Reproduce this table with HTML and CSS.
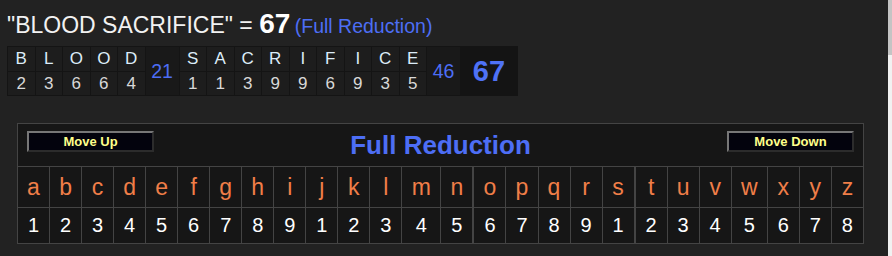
FILE: index.html
```html
<!DOCTYPE html>
<html>
<head>
<meta charset="utf-8">
<link rel="stylesheet" href="styles.css">
</head>
<body>
<div class="page">
  <div class="headline">
    <span class="phrase">"BLOOD SACRIFICE" = </span><span class="value">67</span> <span class="cipher-name">(Full Reduction)</span>
  </div>
  <table class="breakdown">
    <tr>
      <td class="lt">B</td><td class="lt">L</td><td class="lt">O</td><td class="lt">O</td><td class="lt">D</td>
      <td class="wsum" rowspan="2">21</td>
      <td class="lt">S</td><td class="lt">A</td><td class="lt">C</td><td class="lt">R</td><td class="lt">I</td><td class="lt">F</td><td class="lt">I</td><td class="lt">C</td><td class="lt">E</td>
      <td class="wsum" rowspan="2">46</td>
      <td class="total" rowspan="2">67</td>
    </tr>
    <tr>
      <td class="nm">2</td><td class="nm">3</td><td class="nm">6</td><td class="nm">6</td><td class="nm">4</td>
      <td class="nm">1</td><td class="nm">1</td><td class="nm">3</td><td class="nm">9</td><td class="nm">9</td><td class="nm">6</td><td class="nm">9</td><td class="nm">3</td><td class="nm">5</td>
    </tr>
  </table>

  <table class="chart">
    <tr>
      <td class="chart-head" colspan="26">
        <div class="head-bar">
          <button class="move-btn">Move Up</button>
          <span class="chart-title">Full Reduction</span>
          <button class="move-btn">Move Down</button>
        </div>
      </td>
    </tr>
    <tr class="letters">
      <td>a</td><td>b</td><td>c</td><td>d</td><td>e</td><td>f</td><td>g</td><td>h</td><td>i</td><td>j</td><td>k</td><td>l</td><td class="wide-m">m</td><td>n</td><td class="sep">o</td><td>p</td><td>q</td><td>r</td><td>s</td><td class="sep">t</td><td>u</td><td>v</td><td class="wide-w">w</td><td>x</td><td>y</td><td>z</td>
    </tr>
    <tr class="numbers">
      <td>1</td><td>2</td><td>3</td><td>4</td><td>5</td><td>6</td><td>7</td><td>8</td><td>9</td><td>1</td><td>2</td><td>3</td><td>4</td><td>5</td><td class="sep">6</td><td>7</td><td>8</td><td>9</td><td>1</td><td class="sep">2</td><td>3</td><td>4</td><td>5</td><td>6</td><td>7</td><td>8</td>
    </tr>
  </table>
</div>
<div class="scrollbar"><div class="thumb"></div></div>
</body>
</html>
```

FILE: styles.css
```css
html, body {
  margin: 0;
  padding: 0;
  background: #222222;
  font-family: "Liberation Sans", Arial, sans-serif;
  overflow: hidden;
}

.page {
  padding: 7px 0 0 7px;
}

.headline {
  height: 33px;
  line-height: 33px;
  color: #f2f2f2;
  white-space: nowrap;
}

.phrase {
  font-size: 23px;
}

.value {
  font-size: 28px;
  font-weight: bold;
  color: #ffffff;
}

.cipher-name {
  font-size: 19.5px;
  color: #4d6ef5;
}

.breakdown {
  margin-top: 6px;
  border-collapse: collapse;
  background: #1d1d1d;
  table-layout: fixed;
}

.breakdown td {
  border: 1px solid #141414;
  text-align: center;
  padding: 0;
}

.breakdown .lt {
  width: 26.5px;
  height: 24px;
  font-size: 17px;
  color: #dcecf8;
}

.breakdown .nm {
  height: 23px;
  font-size: 17px;
  color: #d8d8d8;
}

.breakdown .wsum {
  width: 33px;
  font-size: 19.5px;
  color: #4d6ef5;
  background: #191919;
}

.breakdown .total {
  width: 56px;
  font-size: 29px;
  font-weight: bold;
  color: #4f72f6;
  background: #141414;
}

.chart {
  margin: 27px 0 0 10px;
  width: 847px;
  border-collapse: collapse;
  background: #161616;
}

.chart td {
  border: 1px solid #444444;
  text-align: center;
  padding: 0;
}

.chart td.sep {
  border-left-width: 2px;
}

.chart .chart-head {
  height: 42px;
}

.head-bar {
  display: flex;
  align-items: center;
  justify-content: space-between;
  padding: 0 9px 0 9px;
  height: 42px;
}

.move-btn {
  width: 127px;
  height: 21px;
  margin-top: -7px;
  padding: 0;
  background: #03030d;
  border: 2px solid;
  border-color: #777777 #2c2c2c #2c2c2c #777777;
  color: #ffff8a;
  font-family: "Liberation Sans", Arial, sans-serif;
  font-size: 13px;
  font-weight: bold;
}

.chart-title {
  font-size: 26px;
  font-weight: bold;
  color: #4d6ef5;
}

.letters td {
  width: 31px;
  height: 40px;
  font-size: 23px;
  color: #f07e48;
}

.letters td.wide-m {
  width: 38px;
}

.letters td.wide-w {
  width: 35px;
}

.numbers td {
  height: 35px;
  font-size: 20px;
  color: #ffffff;
}

.scrollbar {
  position: fixed;
  top: 0;
  right: 0;
  width: 4px;
  height: 100%;
  background: #f1f1f1;
}

.thumb {
  height: 55px;
  background: #c4c4c4;
}
```
